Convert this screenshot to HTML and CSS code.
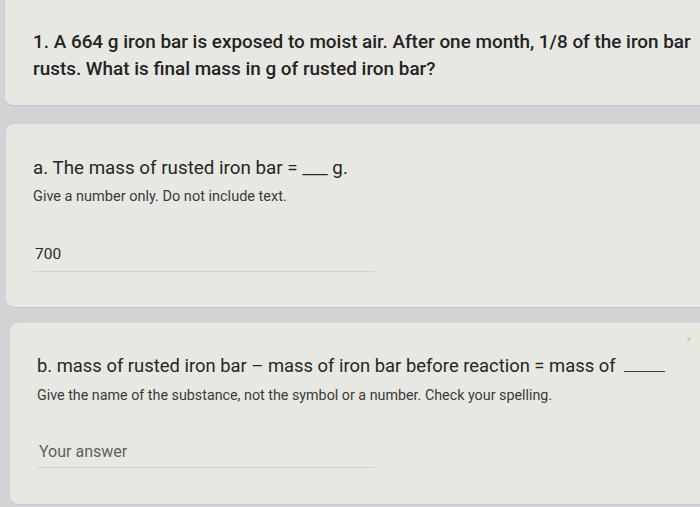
FILE: index.html
```html
<!DOCTYPE html>
<html lang="en">
<head>
<meta charset="utf-8">
<title>Quiz</title>
<link rel="stylesheet" href="styles.css">
</head>
<body>
<main class="form">
  <section class="card card-head">
    <h1 class="q-title">1. A 664 g iron bar is exposed to moist air. After one month, 1/8 of the iron bar rusts. What is final mass in g of rusted iron bar?</h1>
  </section>
  <section class="card card-a">
    <h2 class="item-title">a. The mass of rusted iron bar = ___ g.</h2>
    <p class="help">Give a number only. Do not include text.</p>
    <div class="answer"><span class="answer-text filled">700</span></div>
  </section>
  <section class="card card-b">
    <h2 class="item-title">b. mass of rusted iron bar – mass of iron bar before reaction = mass of <span class="blank"></span></h2>
    <p class="help">Give the name of the substance, not the symbol or a number. Check your spelling.</p>
    <div class="answer"><span class="answer-text placeholder">Your answer</span></div>
    <span class="speck"></span>
  </section>
</main>
</body>
</html>
```
FILE: styles.css
```css
html, body {
  margin: 0;
  padding: 0;
  overflow: hidden;
}
body {
  background: #d4d2d5;
  width: 700px;
  height: 507px;
  font-family: Roboto, "Liberation Sans", sans-serif;
  color: #272727;
}
.form {
  display: flex;
  flex-direction: column;
  gap: 19px;
}
.card {
  position: relative;
  background: #e8e8e3;
  border-radius: 8px;
  margin-right: -20px;
  box-shadow: 0 1px 1px rgba(0,0,0,0.06);
}
.card-head {
  margin-left: 5px;
  margin-top: -6px;
  padding: 34px 0 23px 28px;
  border-radius: 0 0 8px 8px;
}
.card-a {
  margin-left: 6px;
  padding: 31px 0 35px 27px;
}
.card-b {
  margin-left: 10px;
  margin-top: -3px;
  padding: 30px 0 36px 27px;
}
.q-title {
  margin: 0;
  width: 662px;
  font-size: 18.9px;
  font-weight: 500;
  line-height: 27px;
  color: #232323;
}
.item-title {
  margin: 0;
  font-weight: 400;
  line-height: 26px;
  color: #262626;
}
.card-a .item-title { font-size: 18.8px; }
.card-b .item-title { font-size: 18.4px; }
.blank {
  display: inline-block;
  width: 41px;
  border-bottom: 1.5px solid #3a3a3a;
  margin-left: 4px;
  vertical-align: baseline;
}
.help {
  margin: 6px 0 0;
  line-height: 19px;
  color: #3a3a3a;
}
.card-a .help { font-size: 14.5px; }
.card-b .help { font-size: 14.3px; margin-top: 7px; }
.answer {
  margin-top: 38px;
  padding-bottom: 7px;
  border-bottom: 1px solid #d3d3ce;
}
.card-a .answer { width: 342px; }
.card-b .answer { width: 337px; margin-top: 37px; padding-bottom: 5px; }
.answer-text {
  display: block;
  line-height: 20px;
  padding-left: 2px;
}
.filled { color: #2c2c2c; font-size: 15.5px; }
.placeholder { color: #5f5f5f; font-size: 16px; }
.speck {
  position: absolute;
  top: 14px;
  right: 29px;
  width: 4px;
  height: 4px;
  border-radius: 50%;
  background: #d8c9a8;
}
```
